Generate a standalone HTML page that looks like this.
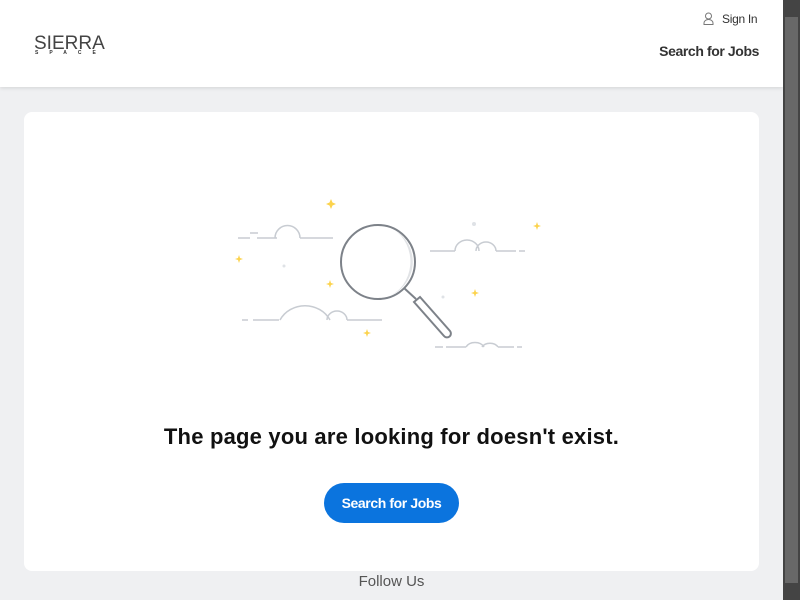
<!DOCTYPE html>
<html><head><style>
body{margin:0;width:800px;height:600px;overflow:hidden;background:#eff0f2;font-family:"Liberation Sans",Arial,sans-serif;position:relative}
.hdr{position:absolute;left:0;top:0;width:783px;height:87px;background:#fff;box-shadow:0 1px 4px rgba(0,0,0,.12)}
.card{position:absolute;left:24px;top:112px;width:735px;height:459px;background:#fff;border-radius:8px}
.sb{position:absolute;left:783px;top:0;width:17px;height:600px;background:#444}
.thumb{position:absolute;left:785px;top:17px;width:13px;height:566px;background:#686868}
</style></head><body>
<div class="hdr">
 <div style="position:absolute;left:34px;top:33px;font-size:19px;color:#444;transform:scaleX(1.0)">SIERRA</div>
 <div style="position:absolute;left:35px;top:50px;font-size:5px;letter-spacing:11px;color:#333;font-weight:bold">SPACE</div>
 <svg style="position:absolute;left:703px;top:12px" width="11" height="13" viewBox="0 0 11 13"><circle cx="5.5" cy="4" r="3" fill="none" stroke="#777"/><path d="M1 12.5v-1.5a4.5 3.5 0 0 1 9 0v1.5z" fill="none" stroke="#777"/></svg>
 <div style="position:absolute;left:722px;top:12px;font-size:12px;color:#333;letter-spacing:-0.3px">Sign In</div>
 <div style="position:absolute;right:24px;top:43px;font-size:14px;font-weight:bold;color:#333;letter-spacing:-0.4px">Search for Jobs</div>
</div>
<div class="card"></div>
<svg style="position:absolute;left:230px;top:190px" width="320" height="170" viewBox="0 0 320 170" fill="none" stroke="#c8ccd2" stroke-width="1.5">
 <path d="M8 48h12M27 48h20M45 48a12 12 0 0 1 25 0M70 48h33M20 43h8"/>
 <path d="M200 61h25M225 61a12 11 0 0 1 24 0M246 61a10 9 0 0 1 20 0M266 61h20M289 61h6"/>
 <path d="M12 130h6M23 130h26M50 130a28 26 0 0 1 50 0M97 130a10 9 0 0 1 20 0M117 130h35"/>
 <path d="M205 157h8M216 157h20M236 157a10 8 0 0 1 18 0M252 157a9 7 0 0 1 16 0M268 157h16M287 157h5"/>
 <circle cx="148" cy="72" r="37" fill="#fff" stroke="#7d8289" stroke-width="2"/>
 <path d="M163 39a37 37 0 0 1 -6 68a33 37 0 0 0 6 -68z" fill="#e1e3e6" stroke="none"/>
 <path d="M174 98l12 11" stroke="#7d8289" stroke-width="2"/>
 <path d="M184 112l6-5 30 34a3 3 0 0 1 -6 5z" fill="#fff" stroke="#7d8289" stroke-width="2"/>
 <g fill="#fcd34d" stroke="none">
  <path d="M101 9l1.5 3.5 3.5 1.5-3.5 1.5-1.5 3.5-1.5-3.5-3.5-1.5 3.5-1.5z"/>
  <path d="M9 65l1 3 3 1-3 1-1 3-1-3-3-1 3-1z"/>
  <path d="M100 90l1 3 3 1-3 1-1 3-1-3-3-1 3-1z"/>
  <path d="M307 32l1 3 3 1-3 1-1 3-1-3-3-1 3-1z"/>
  <path d="M245 99l1 3 3 1-3 1-1 3-1-3-3-1 3-1z"/>
  <path d="M137 139l1 3 3 1-3 1-1 3-1-3-3-1 3-1z"/>
 </g>
 <g fill="#dfe2e6" stroke="none"><circle cx="244" cy="34" r="2"/><circle cx="54" cy="76" r="1.5"/><circle cx="213" cy="107" r="1.5"/></g>
</svg>
<div style="position:absolute;left:0;width:783px;top:424px;text-align:center;font-size:22px;font-weight:bold;color:#111;letter-spacing:0.2px">The page you are looking for doesn't exist.</div>
<div style="position:absolute;left:324px;top:483px;width:135px;height:40px;border-radius:20px;background:#0b74de;color:#fff;font-size:14px;font-weight:bold;text-align:center;line-height:40px;letter-spacing:-0.4px">Search for Jobs</div>
<div style="position:absolute;left:0;width:783px;top:573px;text-align:center;font-size:15px;color:#555">Follow Us</div>
<div class="sb"></div><div class="thumb"></div>
</body></html>
